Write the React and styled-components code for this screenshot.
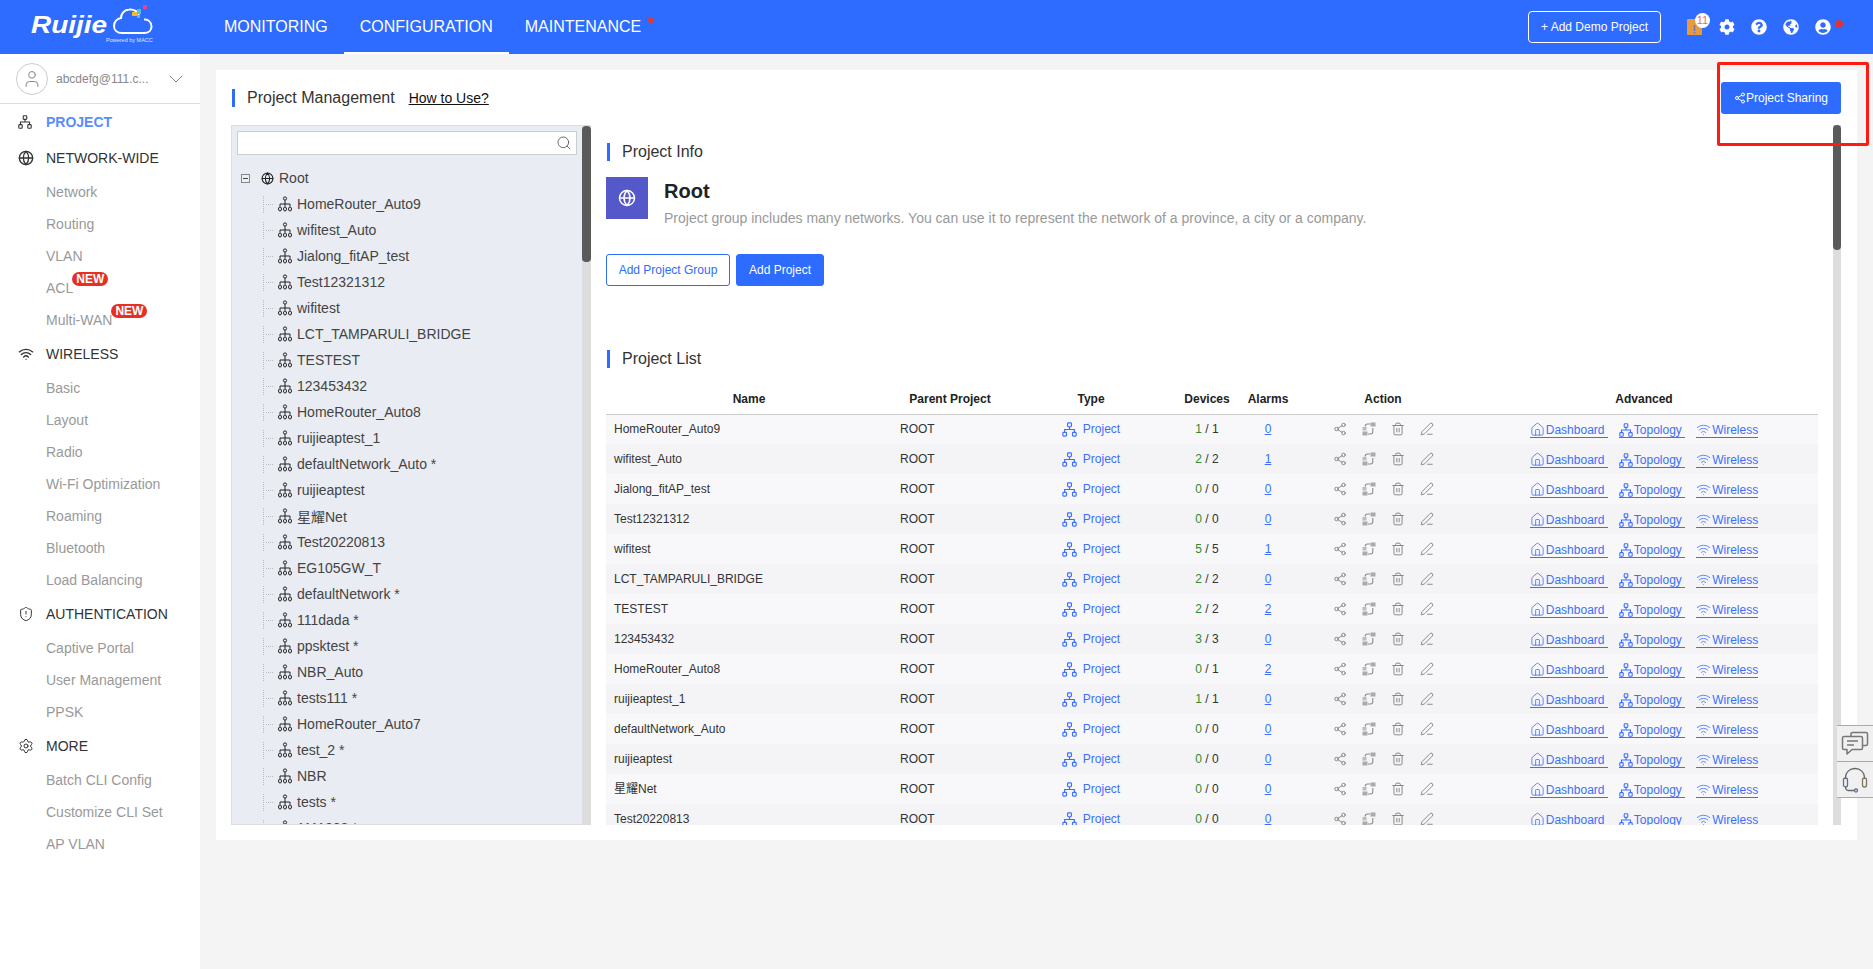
import React from 'react';
import styled, { createGlobalStyle } from 'styled-components';
import {
  ChevronDown, Globe, House, PenLine, Search,
  Settings, Share2, ShieldAlert, Trash2, User, Wifi,
} from 'lucide-react';
import { FaCog, FaGlobeAmericas, FaQuestionCircle, FaUserCircle } from 'react-icons/fa';

const BLUE = '#2e6bff';

const GlobalStyle = createGlobalStyle`
  html, body { margin: 0; padding: 0; height: 100%; overflow: hidden; }
  body {
    font-family: "Liberation Sans", "Noto Sans CJK SC", sans-serif;
    background: #f4f4f4;
    color: #333;
  }
  * { box-sizing: border-box; }
`;

/* header */
const Header = styled.header`
  height: 54px;
  background: ${BLUE};
  display: flex;
  align-items: stretch;
  color: #fff;
`;

const LogoBox = styled.div`
  width: 208px;
  flex: none;
`;

const Nav = styled.nav`
  display: flex;
  flex: 1;
`;

const NavItem = styled.a`
  position: relative;
  display: flex;
  align-items: center;
  padding: 0 16px;
  font-size: 16px;
  border-bottom: 2px solid ${p => (p.$active ? '#fff' : 'transparent')};
  border-top: 2px solid transparent;
`;

const NavDot = styled.span`
  position: absolute;
  top: 15px;
  right: 3px;
  width: 6px;
  height: 6px;
  border-radius: 50%;
  background: #e23a32;
`;

const HeaderRight = styled.div`
  display: flex;
  align-items: center;
  padding-right: 42px;
`;

const DemoButton = styled.button`
  width: 133px;
  height: 32px;
  margin-right: 26px;
  background: transparent;
  border: 1px solid #fff;
  border-radius: 4px;
  color: #fff;
  font: 12px "Liberation Sans", sans-serif;
`;

const HeadIcons = styled.div`
  display: flex;
  align-items: center;
  gap: 16px;
  font-size: 16px;
`;

const AlertWrap = styled.span`
  position: relative;
  display: block;
  width: 16px;
  height: 16px;
`;

const AlertBadge = styled.span`
  position: absolute;
  top: -6px;
  left: 8px;
  width: 15px;
  height: 15px;
  border-radius: 50%;
  background: #fff;
  color: #e56b6b;
  font-size: 11px;
  line-height: 15px;
  text-align: center;
`;

const UserIconWrap = styled.span`
  position: relative;
  display: block;
  height: 16px;
`;

const RedDot = styled.span`
  position: absolute;
  top: 1px;
  left: 20px;
  width: 8px;
  height: 8px;
  border-radius: 50%;
  background: #d6353a;
`;

/* sidebar */
const Shell = styled.div`
  display: flex;
  height: 915px;
`;

const Sidebar = styled.aside`
  width: 200px;
  flex: none;
  background: #fff;
`;

const UserRow = styled.div`
  height: 50px;
  display: flex;
  align-items: center;
  padding-left: 16px;
  border-bottom: 1px solid #ddd;
  color: #888;
  font-size: 12px;
`;

const Avatar = styled.span`
  width: 32px;
  height: 32px;
  margin-right: 8px;
  border: 1px solid #ccc;
  border-radius: 50%;
  display: flex;
  align-items: center;
  justify-content: center;
  color: #888;
`;

const UserName = styled.span`
  width: 108px;
  color: #888;
`;

const MenuHead = styled.div`
  height: 36px;
  display: flex;
  align-items: center;
  padding-left: 18px;
  font-size: 14px;
  font-weight: ${p => (p.$active ? 700 : 400)};
  color: ${p => (p.$active ? '#5a8cff' : '#333')};
`;

const MenuIcon = styled.span`
  width: 28px;
  display: flex;
  color: #333;
`;

const MenuItem = styled.div`
  height: 32px;
  display: flex;
  align-items: center;
  padding-left: 46px;
  font-size: 14px;
  color: #999;
`;

const MenuLabel = styled.span`
  position: relative;
  line-height: 16px;
`;

const NewBadge = styled.span`
  position: absolute;
  top: -8px;
  left: 100%;
  margin-left: -1px;
  width: 36px;
  height: 14px;
  border-radius: 7px;
  background: #e53023;
  color: #fff;
  font-size: 12px;
  font-weight: 700;
  line-height: 14px;
  text-align: center;
`;

/* main card */
const Main = styled.main`
  flex: 1;
  padding: 16px;
`;

const Card = styled.section`
  height: 770px;
  background: #fff;
  padding: 12px 16px 15px 15px;
`;

const TopRow = styled.div`
  height: 32px;
  display: flex;
  align-items: center;
  justify-content: space-between;
  margin-bottom: 11px;
`;

const TitleGroup = styled.div`
  display: flex;
  align-items: center;
  gap: 14px;
`;

const SectionTitle = styled.h2`
  margin: 0 0 0 1px;
  height: 18px;
  padding-left: 12px;
  border-left: 3px solid ${BLUE};
  font-size: 16px;
  font-weight: 400;
  line-height: 18px;
  color: #333;
`;

const HowTo = styled.a`
  font-size: 14px;
  color: #111;
  text-decoration: underline;
`;

const ShareButton = styled.button`
  width: 120px;
  height: 32px;
  display: flex;
  align-items: center;
  justify-content: center;
  background: ${BLUE};
  border: 0;
  border-radius: 3px;
  color: #fff;
  font: 12px "Liberation Sans", sans-serif;
`;

const Callout = styled.div`
  position: absolute;
  left: 1717px;
  top: 62px;
  width: 152px;
  height: 84px;
  border: 3px solid #ff1a12;
  border-radius: 2px;
  pointer-events: none;
  z-index: 5;
`;

const Columns = styled.div`
  display: flex;
  height: 700px;
`;

/* tree */
const TreePanel = styled.div`
  width: 360px;
  flex: none;
  display: flex;
  background: #e9ecf3;
  border: 1px solid #ddd;
  border-right: 0;
  overflow: hidden;
`;

const TreeBody = styled.div`
  flex: 1;
  padding: 5px 0 0 5px;
  min-width: 0;
`;

const SearchBox = styled.div`
  width: 340px;
  height: 24px;
  margin-bottom: 10px;
  display: flex;
  align-items: center;
  justify-content: flex-end;
  padding-right: 4px;
  background: #fff;
  border: 1px solid #ccc;
  color: #555;
`;

const RootRow = styled.div`
  height: 26px;
  display: flex;
  align-items: center;
  font-size: 14px;
  color: #444;
  padding-left: 4px;
`;

const Expander = styled.span`
  position: relative;
  width: 9px;
  height: 9px;
  margin-right: 11px;
  border: 1px solid #888;
  background: #eee;
  &::after {
    content: '';
    position: absolute;
    left: 1px;
    right: 1px;
    top: 3px;
    height: 1px;
    background: #444;
  }
`;

const RootGlobe = styled.span`
  display: flex;
  width: 18px;
  color: #222;
`;

const TreeRow = styled.div`
  height: 26px;
  display: flex;
  align-items: center;
  padding-left: 26px;
  font-size: 14px;
  color: #444;
  white-space: nowrap;
`;

const Connector = styled.span`
  position: relative;
  width: 15px;
  height: 17px;
  border-left: 1px dotted #bbb;
  &::after {
    content: '';
    position: absolute;
    left: 2px;
    top: 8px;
    width: 7px;
    border-top: 1px dotted #bbb;
  }
`;

const TreeLabel = styled.span`
  margin-left: 5px;
`;

const ScrollTrack = styled.div`
  width: ${p => p.$width}px;
  flex: none;
  background: #ddd;
`;

const ScrollThumb = styled.div`
  height: ${p => p.$height}px;
  background: #5a5a5a;
  border-radius: 4px;
`;

/* right side */
const Detail = styled.div`
  margin-left: 9px;
  flex: 1;
  min-width: 0;
  display: flex;
  overflow: hidden;
`;

const DetailBody = styled.div`
  flex: 1;
  min-width: 0;
  padding: 18px 15px 0 6px;
`;

const InfoBlock = styled.div`
  margin-top: 16px;
  display: flex;
  gap: 16px;
`;

const InfoIcon = styled.div`
  width: 42px;
  height: 42px;
  flex: none;
  background: #5558c8;
  color: #fff;
  display: flex;
  align-items: center;
  justify-content: center;
`;

const InfoName = styled.div`
  height: 28px;
  font-size: 20px;
  font-weight: 700;
  line-height: 28px;
  color: #222;
`;

const InfoText = styled.div`
  height: 26px;
  font-size: 14px;
  line-height: 26px;
  color: #999;
  white-space: nowrap;
`;

const ButtonRow = styled.div`
  margin: 23px 0 64px;
  display: flex;
  gap: 6px;
`;

const ActionButton = styled.button`
  height: 32px;
  width: ${p => p.$width}px;
  border: 1px solid ${BLUE};
  border-radius: 3px;
  background: ${p => (p.$primary ? BLUE : '#fff')};
  color: ${p => (p.$primary ? '#fff' : BLUE)};
  font: 12px "Liberation Sans", sans-serif;
`;

const Table = styled.table`
  margin-top: 18px;
  width: 1212px;
  table-layout: fixed;
  border-collapse: collapse;
  font-size: 12px;
`;

const Th = styled.th`
  height: 28px;
  padding: 0 0 2px;
  font-weight: 700;
  color: #222;
  border-bottom: 1px solid #ccc;
  text-align: center;
`;

const Tr = styled.tr`
  height: 30px;
  background: ${p => (p.$odd ? '#f8f8fa' : '#f4f4f6')};
`;

const Td = styled.td`
  padding: 0 0 0 ${p => p.$pad || 0}px;
  text-align: ${p => (p.$pad ? 'left' : 'center')};
  color: #333;
  line-height: 14px;
  white-space: nowrap;
`;

const TypeTag = styled.span`
  display: inline-flex;
  align-items: center;
  vertical-align: middle;
  gap: 6px;
  color: #3b6fff;
`;

const Good = styled.span`
  color: #2e8b2e;
`;

const AlarmLink = styled.a`
  color: #3b6fff;
  text-decoration: underline;
`;

const ActionIcons = styled.div`
  display: flex;
  justify-content: flex-start;
  gap: 15px;
  padding-left: 37px;
  color: #7c7c7c;
`;

const Links = styled.div`
  display: flex;
  justify-content: center;
  gap: 11px;
  padding-top: 2px;
`;

const AdvLink = styled.a`
  display: inline-flex;
  align-items: flex-end;
  gap: 1px;
  color: #3b6fff;
  border-bottom: 1px solid #3b6fff;
  line-height: 13px;
`;

/* floating help */
const FloatBar = styled.div`
  position: absolute;
  right: 0;
  top: 725px;
  width: 36px;
  background: #f0f0f0;
  border-top: 1px solid #aaa;
`;

const FloatCell = styled.div`
  height: 36px;
  display: flex;
  align-items: center;
  justify-content: center;
  border-bottom: 1px solid #aaa;
`;

/* drawings */
const OrgTree = () => (
  <svg width="14" height="16" viewBox="0 0 14 16" fill="none" stroke="#222" strokeWidth="1">
    <circle cx="7" cy="2.5" r="1.6" />
    <path d="M7 4.1V8M2 10.500V8H12V10.500M7 8V10.500" />
    <ellipse cx="2" cy="13" rx="1.500" ry="2" />
    <ellipse cx="7" cy="13" rx="1.500" ry="2" />
    <ellipse cx="12" cy="13" rx="1.500" ry="2" />
  </svg>
);

const Topology = ({ size = 14, color = 'currentColor', width = 1.1 }) => (
  <svg width={size} height={size} viewBox="0 0 14 14" fill="none" stroke={color} strokeWidth={width}>
    <rect x="5.200" y="0.800" width="3.600" height="3.600" rx="0.800" />
    <path d="M7 4.400V7M2.500 9.600V7H11.500V9.600" />
    <rect x="0.800" y="9.600" width="3.400" height="3.600" rx="0.800" />
    <rect x="9.800" y="9.600" width="3.400" height="3.600" rx="0.800" />
  </svg>
);

const SyncIcon = () => (
  <svg width="14" height="14" viewBox="0 0 14 14" fill="none" stroke="#8c8c8c" strokeWidth="1.100">
    <rect x="8.500" y="0.500" width="5" height="4" fill="#aaa" stroke="none" />
    <rect x="0.500" y="9.500" width="5" height="4" fill="#aaa" stroke="none" />
    <rect x="0.500" y="5" width="4" height="3.500" fill="#bbb" stroke="none" />
    <path d="M8 2H5.500C4 2 3.200 3 3.200 4.500M6 12H8.500C10 12 10.800 11 10.800 9.500V6" />
  </svg>
);

const AlertBook = () => (
  <svg width="15" height="16" viewBox="0 0 15 16">
    <rect width="15" height="16" rx="1" fill="#e99a3b" />
    <rect x="6.700" y="6" width="1.600" height="6" fill="#6b78c9" />
    <rect x="6.700" y="13" width="1.600" height="1.600" fill="#6b78c9" />
  </svg>
);

const ChatIcon = () => (
  <svg width="28" height="26" viewBox="0 0 28 26" fill="none" stroke="#777" strokeWidth="1.500" strokeLinejoin="round">
    <path d="M10 5V3C10 2 10.500 1.500 11.500 1.500H25C26 1.500 26.500 2 26.500 3V13C26.500 14 26 14.500 25 14.500H22" />
    <path d="M3 5.500H20C21 5.500 21.500 6 21.500 7V17C21.500 18 21 18.500 20 18.500H11L6 23V18.500H3C2 18.500 1.500 18 1.500 17V7C1.500 6 2 5.500 3 5.500Z" fill="#f0f0f0" />
    <path d="M6 10H17M6 14H13" />
  </svg>
);

const HeadsetIcon = () => (
  <svg width="26" height="26" viewBox="0 0 26 26" fill="none" stroke="#666" strokeWidth="1.300">
    <path d="M3.500 12V10.500C3.500 5.500 7.500 1.500 13 1.500C18.500 1.500 22.500 5.500 22.500 10.500V12" />
    <rect x="1.500" y="11" width="4" height="9" rx="2" stroke="#5f6f8f" />
    <rect x="20.500" y="11" width="4" height="9" rx="2" stroke="#7f7468" />
    <path d="M3.500 20C3.500 22.500 5 23.500 7 23.500H12" />
    <circle cx="14" cy="23.500" r="1.500" stroke="#5f6f8f" />
  </svg>
);

const Logo = () => (
  <svg width="208" height="54" viewBox="0 0 208 54">
    <text x="31" y="33" fontFamily="Liberation Sans" fontSize="24" fontWeight="700" fontStyle="italic" fill="#fff" textLength="76" lengthAdjust="spacingAndGlyphs">Ruijie</text>
    <path d="M139 15C137 11 133 9 129 9.500C124 10 121 14 121 18C117 18.500 114 22 114 26C114 30 117 33 122 33H144C149 33 151.500 30 151.500 26.500C151.500 22 148 19 144 19.500" fill="none" stroke="#fff" strokeWidth="2" />
    <rect x="143" y="5" width="4" height="4" fill="#e84393" />
    <rect x="137" y="9" width="4" height="5" fill="#4fc3d9" />
    <rect x="137" y="15" width="3" height="3" fill="#4fc3d9" />
    <rect x="132" y="12" width="5" height="4" fill="#f5b82e" />
    <text x="106" y="42" fontFamily="Liberation Sans" fontSize="5.500" fill="#dfe8ff">Powered by MACC</text>
  </svg>
);

const treeItems = [
  'HomeRouter_Auto9', 'wifitest_Auto', 'Jialong_fitAP_test', 'Test12321312', 'wifitest',
  'LCT_TAMPARULI_BRIDGE', 'TESTEST', '123453432', 'HomeRouter_Auto8', 'ruijieaptest_1',
  'defaultNetwork_Auto *', 'ruijieaptest', '星耀Net', 'Test20220813', 'EG105GW_T',
  'defaultNetwork *', '111dada *', 'ppsktest *', 'NBR_Auto', 'tests111 *', 'HomeRouter_Auto7',
  'test_2 *', 'NBR', 'tests *', '1111222 *',
];

const projects = [
  ['HomeRouter_Auto9', 1, 1, 0], ['wifitest_Auto', 2, 2, 1], ['Jialong_fitAP_test', 0, 0, 0],
  ['Test12321312', 0, 0, 0], ['wifitest', 5, 5, 1], ['LCT_TAMPARULI_BRIDGE', 2, 2, 0],
  ['TESTEST', 2, 2, 2], ['123453432', 3, 3, 0], ['HomeRouter_Auto8', 0, 1, 2],
  ['ruijieaptest_1', 1, 1, 0], ['defaultNetwork_Auto', 0, 0, 0], ['ruijieaptest', 0, 0, 0],
  ['星耀Net', 0, 0, 0], ['Test20220813', 0, 0, 0],
];

const menu = [
  { head: 'NETWORK-WIDE', icon: <Globe size={16} />, items: ['Network', 'Routing', 'VLAN', 'ACL', 'Multi-WAN'] },
  { head: 'WIRELESS', icon: <Wifi size={16} />, items: ['Basic', 'Layout', 'Radio', 'Wi-Fi Optimization', 'Roaming', 'Bluetooth', 'Load Balancing'] },
  { head: 'AUTHENTICATION', icon: <ShieldAlert size={16} strokeWidth={1.500} />, items: ['Captive Portal', 'User Management', 'PPSK'] },
  { head: 'MORE', icon: <Settings size={16} strokeWidth={1.500} />, items: ['Batch CLI Config', 'Customize CLI Set', 'AP VLAN'] },
];

const newItems = ['ACL', 'Multi-WAN'];

const App = () => (
  <>
    <GlobalStyle />
    <Header>
      <LogoBox><Logo /></LogoBox>
      <Nav>
        <NavItem>MONITORING</NavItem>
        <NavItem $active>CONFIGURATION</NavItem>
        <NavItem>MAINTENANCE<NavDot /></NavItem>
      </Nav>
      <HeaderRight>
        <DemoButton>+ Add Demo Project</DemoButton>
        <HeadIcons>
          <AlertWrap><AlertBook /><AlertBadge>11</AlertBadge></AlertWrap>
          <FaCog />
          <FaQuestionCircle />
          <FaGlobeAmericas />
          <UserIconWrap><FaUserCircle /><RedDot /></UserIconWrap>
        </HeadIcons>
      </HeaderRight>
    </Header>
    <Shell>
      <Sidebar>
        <UserRow>
          <Avatar><User size={20} strokeWidth={1.200} /></Avatar>
          <UserName>abcdefg@111.c...</UserName>
          <ChevronDown size={24} strokeWidth={1} />
        </UserRow>
        <MenuHead $active>
          <MenuIcon><Topology /></MenuIcon>PROJECT
        </MenuHead>
        {menu.map(group => (
          <div key={group.head}>
            <MenuHead>
              <MenuIcon>{group.icon}</MenuIcon>{group.head}
            </MenuHead>
            {group.items.map(item => (
              <MenuItem key={item}>
                <MenuLabel>
                  {item}
                  {newItems.includes(item) && <NewBadge>NEW</NewBadge>}
                </MenuLabel>
              </MenuItem>
            ))}
          </div>
        ))}
      </Sidebar>
      <Main>
        <Card>
          <TopRow>
            <TitleGroup>
              <SectionTitle>Project Management</SectionTitle>
              <HowTo>How to Use?</HowTo>
            </TitleGroup>
            <ShareButton><Share2 size={12} />Project Sharing</ShareButton>
          </TopRow>
          <Columns>
            <TreePanel>
              <TreeBody>
                <SearchBox><Search size={16} strokeWidth={1.300} /></SearchBox>
                <RootRow>
                  <Expander />
                  <RootGlobe><Globe size={13} /></RootGlobe>
                  Root
                </RootRow>
                {treeItems.map(item => (
                  <TreeRow key={item}>
                    <Connector />
                    <OrgTree />
                    <TreeLabel>{item}</TreeLabel>
                  </TreeRow>
                ))}
              </TreeBody>
              <ScrollTrack $width={9}><ScrollThumb $height={136} /></ScrollTrack>
            </TreePanel>
            <Detail>
              <DetailBody>
                <SectionTitle>Project Info</SectionTitle>
                <InfoBlock>
                  <InfoIcon><Globe size={18} /></InfoIcon>
                  <div>
                    <InfoName>Root</InfoName>
                    <InfoText>Project group includes many networks. You can use it to represent the network of a province, a city or a company.</InfoText>
                  </div>
                </InfoBlock>
                <ButtonRow>
                  <ActionButton $width={124}>Add Project Group</ActionButton>
                  <ActionButton $width={88} $primary>Add Project</ActionButton>
                </ButtonRow>
                <SectionTitle>Project List</SectionTitle>
                <Table>
                  <colgroup>
                    <col width="286" />
                    <col width="116" />
                    <col width="166" />
                    <col width="66" />
                    <col width="56" />
                    <col width="174" />
                    <col width="348" />
                  </colgroup>
                  <thead>
                    <tr>
                      <Th>Name</Th>
                      <Th>Parent Project</Th>
                      <Th>Type</Th>
                      <Th>Devices</Th>
                      <Th>Alarms</Th>
                      <Th>Action</Th>
                      <Th>Advanced</Th>
                    </tr>
                  </thead>
                  <tbody>
                    {projects.map(([name, online, total, alarms], i) => (
                      <Tr key={name} $odd={i % 2 === 0}>
                        <Td $pad={8}>{name}</Td>
                        <Td $pad={8}>ROOT</Td>
                        <Td><TypeTag><Topology size={15} />Project</TypeTag></Td>
                        <Td><Good>{online}</Good> / {total}</Td>
                        <Td><AlarmLink>{alarms}</AlarmLink></Td>
                        <Td>
                          <ActionIcons>
                            <Share2 size={14} strokeWidth={1.500} />
                            <SyncIcon />
                            <Trash2 size={14} strokeWidth={1.500} />
                            <PenLine size={14} strokeWidth={1.500} />
                          </ActionIcons>
                        </Td>
                        <Td>
                          <Links>
                            <AdvLink><House size={15} strokeWidth={1.300} />Dashboard&nbsp;</AdvLink>
                            <AdvLink><Topology size={14} />Topology&nbsp;</AdvLink>
                            <AdvLink><Wifi size={15} strokeWidth={1.300} />Wireless</AdvLink>
                          </Links>
                        </Td>
                      </Tr>
                    ))}
                  </tbody>
                </Table>
              </DetailBody>
              <ScrollTrack $width={8}><ScrollThumb $height={125} /></ScrollTrack>
            </Detail>
          </Columns>
        </Card>
      </Main>
    </Shell>
    <Callout />
    <FloatBar>
      <FloatCell><ChatIcon /></FloatCell>
      <FloatCell><HeadsetIcon /></FloatCell>
    </FloatBar>
  </>
);

export default App;
